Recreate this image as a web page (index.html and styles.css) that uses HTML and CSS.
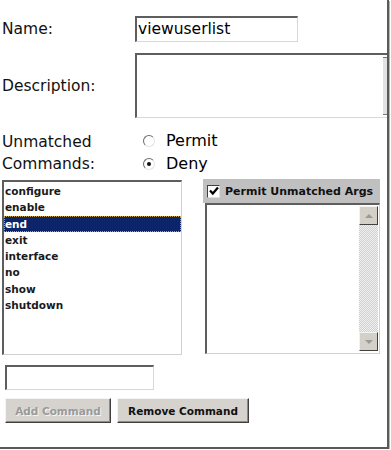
FILE: index.html
```html
<!DOCTYPE html>
<html lang="en">

<head>
    <meta charset="UTF-8">
    <title>Command Set</title>
    <link rel="stylesheet" href="styles.css">
</head>

<body>
    <div class="panel">
        <div class="row name-row">
            <label class="label">Name:</label>
            <div class="field name-field">viewuserlist</div>
        </div>

        <div class="row desc-row">
            <label class="label">Description:</label>
            <div class="field desc-field"><span class="desc-scroll"></span></div>
        </div>

        <div class="row unmatched-row">
            <label class="label">Unmatched<br>Commands:</label>
            <div class="radios">
                <div class="radio-item"><span class="radio"></span>Permit</div>
                <div class="radio-item"><span class="radio checked"></span>Deny</div>
            </div>
        </div>

        <div class="lists">
            <ul class="cmd-list">
                <li>configure</li>
                <li>enable</li>
                <li class="selected">end</li>
                <li>exit</li>
                <li>interface</li>
                <li>no</li>
                <li>show</li>
                <li>shutdown</li>
            </ul>

            <div class="args">
                <div class="args-head">
                    <span class="check">
                        <svg width="10" height="10" viewBox="0 0 10 10">
                            <path d="M1 4.5 L3.8 7.5 L9 1.5" fill="none" stroke="#000" stroke-width="2.2" />
                        </svg>
                    </span>
                    Permit Unmatched Args
                </div>
                <div class="args-box">
                    <div class="scrollbar">
                        <span class="sb-btn"><span class="arrow up"></span></span>
                        <span class="sb-track"></span>
                        <span class="sb-btn"><span class="arrow down"></span></span>
                    </div>
                </div>
            </div>
        </div>

        <div class="field new-cmd"></div>

        <div class="buttons">
            <button class="btn" disabled>Add Command</button>
            <button class="btn">Remove Command</button>
        </div>
    </div>
</body>

</html>
```

FILE: styles.css
```css
* {
    margin: 0;
    padding: 0;
    box-sizing: border-box;
}

body {
    background: #ffffff;
    font-family: 'DejaVu Sans', Verdana, sans-serif;
    color: #000;
}

.panel {
    width: 389px;
    height: 449px;
    padding: 16px 0 0 2px;
    border-right: 2px solid #5a5a5a;
    border-bottom: 2px solid #5a5a5a;
    box-shadow: 1px 1px 0 #b5b5b5;
    overflow: hidden;
}

.row {
    display: flex;
    align-items: center;
}

.label {
    flex-shrink: 0;
    width: 133px;
    font-size: 15.5px;
    color: #111;
}

.field {
    flex-shrink: 0;
    background: #fff;
    border-top: 2px solid #5e5e5e;
    border-left: 2px solid #5e5e5e;
    border-right: 1px solid #d8d8d8;
    border-bottom: 1px solid #d8d8d8;
}

.name-field {
    width: 163px;
    height: 26px;
    font-size: 15.5px;
    line-height: 22px;
    padding-left: 1px;
}

.desc-row {
    margin-top: 11px;
}

.desc-field {
    position: relative;
    width: 260px;
    height: 65px;
}

.desc-scroll {
    position: absolute;
    left: 246px;
    top: 2px;
    width: 4px;
    height: 58px;
    border-top: 1px solid #777;
    border-bottom: 1px solid #777;
    background: #e2e2e2;
}

.unmatched-row {
    margin-top: 11px;
    align-items: flex-start;
}

.unmatched-row .label {
    line-height: 22px;
    padding-top: 2px;
}

.radios {
    padding-left: 8px;
    font-size: 16px;
    line-height: 23px;
    padding-top: 0;
}

.radio-item {
    display: flex;
    align-items: center;
    gap: 11px;
}

.radio {
    position: relative;
    width: 12px;
    height: 12px;
    border-radius: 50%;
    border: 1px solid;
    border-color: #6b6b6b #e4e4e4 #e4e4e4 #6b6b6b;
    background: #fff;
}

.radio.checked::after {
    content: "";
    position: absolute;
    left: 3px;
    top: 3px;
    width: 4px;
    height: 4px;
    border-radius: 50%;
    background: #111;
}

.lists {
    display: flex;
    margin-top: 5px;
    gap: 21px;
}

.cmd-list {
    list-style: none;
    width: 180px;
    height: 175px;
    border-top: 2px solid #5e5e5e;
    border-left: 2px solid #5e5e5e;
    border-right: 1px solid #d2d2d2;
    border-bottom: 1px solid #d2d2d2;
    padding-top: 1px;
    font-size: 10.5px;
    font-weight: bold;
    color: #1a1a1a;
}

.cmd-list li {
    height: 16.3px;
    line-height: 16px;
    padding-left: 1px;
}

.cmd-list li.selected {
    background: #0b246a;
    color: #fff;
    outline: 1px dotted #c9a44a;
    outline-offset: -1px;
}

.args {
    width: 177px;
    margin-top: -1px;
}

.args-head {
    display: flex;
    align-items: center;
    gap: 5px;
    height: 24px;
    background: #c0c0c0;
    padding-left: 4px;
    font-size: 11px;
    font-weight: bold;
    color: #111;
    white-space: nowrap;
}

.check {
    display: flex;
    align-items: center;
    justify-content: center;
    width: 13px;
    height: 13px;
    background: #fff;
    border: 1px solid;
    border-color: #404040 #e0e0e0 #e0e0e0 #404040;
}

.args-box {
    display: flex;
    justify-content: flex-end;
    width: 175px;
    height: 151px;
    margin-left: 2px;
    background: #fff;
    border-top: 2px solid #5e5e5e;
    border-left: 2px solid #5e5e5e;
    border-right: 1px solid #d2d2d2;
    border-bottom: 1px solid #d2d2d2;
    padding: 1px 1px 2px 0;
}

.scrollbar {
    display: flex;
    flex-direction: column;
    width: 19px;
}

.sb-btn {
    display: flex;
    align-items: center;
    justify-content: center;
    height: 19px;
    background: #d4d0c8;
    border: 1px solid;
    border-color: #f2f2f2 #404040 #404040 #f2f2f2;
}

.sb-track {
    flex: 1;
    background-color: #e6e6e6;
    background-image: repeating-conic-gradient(#d0d0d0 0 25%, #f0f0f0 0 50%);
    background-size: 2px 2px;
}

.arrow {
    width: 0;
    height: 0;
    border-left: 4px solid transparent;
    border-right: 4px solid transparent;
}

.arrow.up {
    border-bottom: 4px solid #9a9a9a;
}

.arrow.down {
    border-top: 4px solid #9a9a9a;
}

.new-cmd {
    width: 149px;
    height: 25px;
    margin: 10px 0 0 3px;
}

.buttons {
    display: flex;
    gap: 6px;
    margin: 8px 0 0 3px;
}

.btn {
    height: 25px;
    padding: 0;
    font-family: 'DejaVu Sans', Verdana, sans-serif;
    font-size: 10.5px;
    font-weight: bold;
    white-space: nowrap;
    color: #111;
    background: #d6d3ce;
    border: 1px solid;
    border-color: #f4f4f4 #404040 #404040 #f4f4f4;
    box-shadow: inset -1px -1px 0 #8a8a8a;
}

.btn:disabled {
    color: #9a9a9a;
    text-shadow: 1px 1px 0 #f4f4f4;
}

.btn:first-child {
    width: 106px;
}

.btn:last-child {
    width: 132px;
}
```
